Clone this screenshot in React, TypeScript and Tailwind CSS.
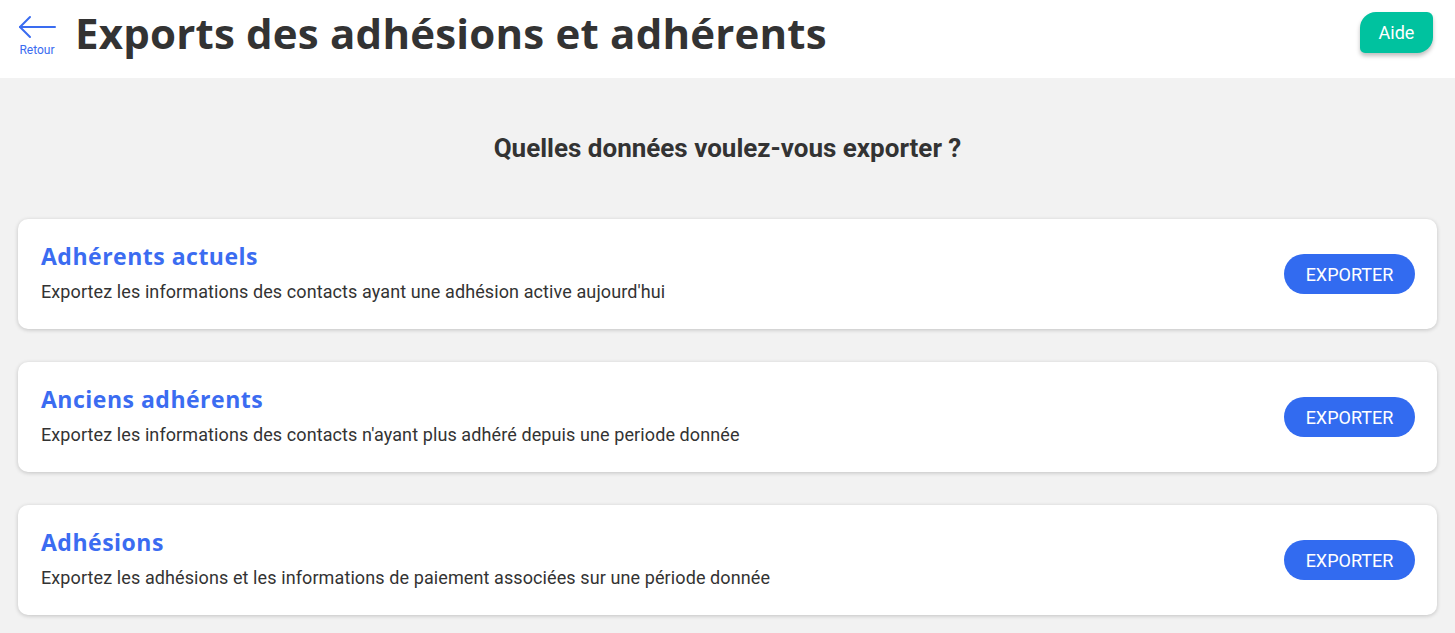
import React from "react";

const cards = [
  {
    title: "Adhérents actuels",
    text: "Exportez les informations des contacts ayant une adhésion active aujourd'hui",
  },
  {
    title: "Anciens adhérents",
    text: "Exportez les informations des contacts n'ayant plus adhéré depuis une periode donnée",
  },
  {
    title: "Adhésions",
    text: "Exportez les adhésions et les informations de paiement associées sur une période donnée",
  },
];

const titleFont = "font-['Open_Sans','DejaVu_Sans',sans-serif]";

export default function App() {
  return (
    <div className="min-h-[633px] bg-[#f2f2f2] font-['Roboto',sans-serif]">
      <header className="flex h-[78px] items-start justify-between bg-white pl-[18px] pr-[22px]">
        <div className="flex items-start">
          <a className="mt-[15px] flex w-[38px] flex-col items-center text-[#3a6cf0]">
            <svg width="38" height="24" viewBox="0 0 38 24" fill="none" stroke="currentColor" strokeWidth="2" strokeLinecap="round" strokeLinejoin="round">
              <path d="M37 12H2" />
              <path d="M12 2L2 12l10 10" />
            </svg>
            <span className="mt-[5px] text-[12px] leading-none">Retour</span>
          </a>
          <h1 className={`ml-[19px] mt-[12px] text-[42px] font-bold leading-none tracking-[0.2px] text-[#333333] ${titleFont}`}>
            Exports des adhésions et adhérents
          </h1>
        </div>
        <button className="mt-[12px] h-[41px] w-[73px] rounded-tl-[16px] rounded-tr-[6px] rounded-br-[16px] rounded-bl-[5px] bg-[#00c29f] text-[18px] font-normal text-white shadow-[0_3px_4px_rgba(0,0,0,0.25)]">
          Aide
        </button>
      </header>

      <h2 className="pt-[55px] pb-[56px] text-center text-[26px] font-bold leading-[30px] text-[#333333]">
        Quelles données voulez-vous exporter ?
      </h2>

      <div className="flex flex-col gap-[33px] px-[18px]">
        {cards.map((c) => (
          <div
            key={c.title}
            className="flex h-[110px] items-center justify-between rounded-[10px] bg-white pl-[23px] pr-[22px] shadow-[0_1px_4px_rgba(0,0,0,0.2)]"
          >
            <div className="mb-[3px]">
              <div className={`text-[23px] font-bold leading-[28px] tracking-[0.5px] text-[#3b6cf1] ${titleFont}`}>{c.title}</div>
              <div className="mt-[11px] text-[18px] leading-[22px] tracking-[0.1px] text-[#333333]">{c.text}</div>
            </div>
            <button className="h-[40px] w-[131px] rounded-full bg-[#326bf0] text-[18px] font-normal text-white">
              EXPORTER
            </button>
          </div>
        ))}
      </div>
    </div>
  );
}
